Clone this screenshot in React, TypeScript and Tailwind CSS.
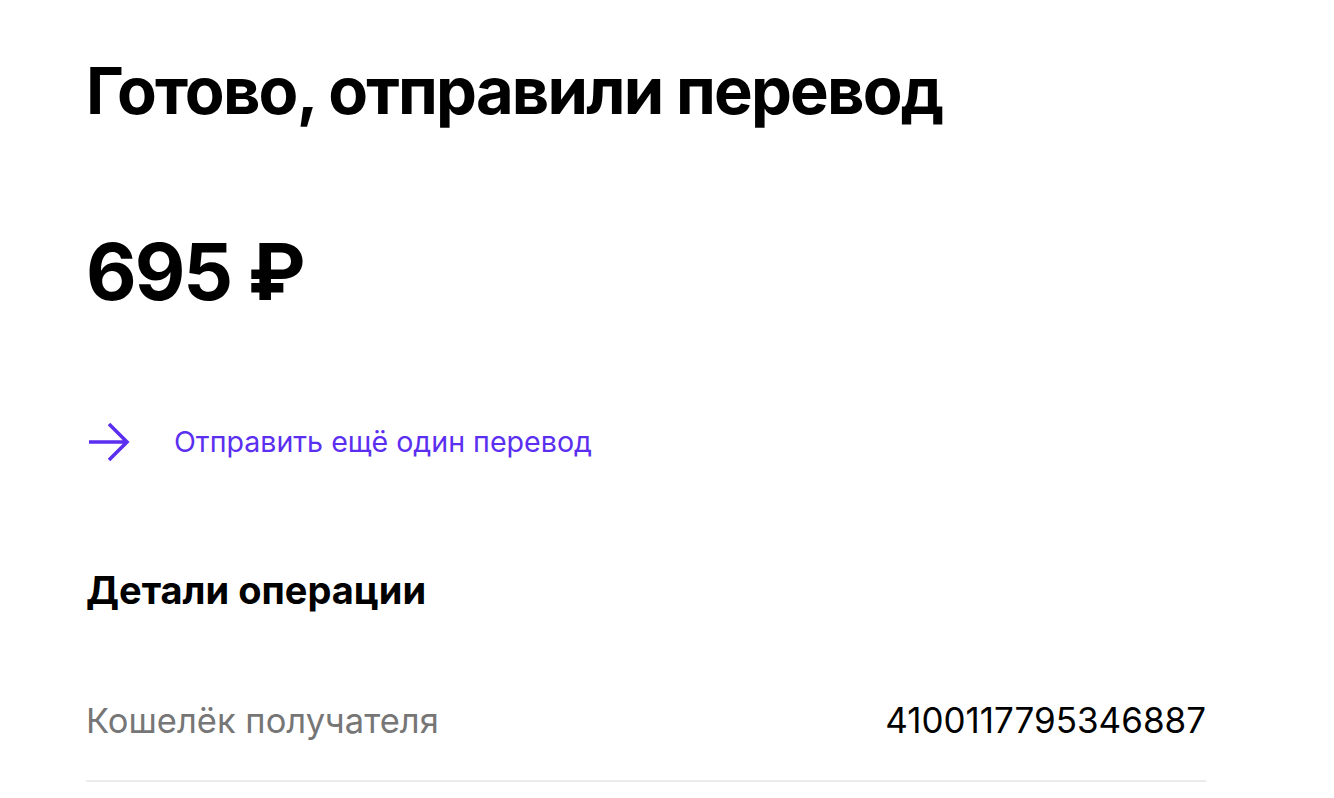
export default function App() {
  return (
    <div className="min-h-screen bg-white font-['Inter','Noto_Sans',sans-serif] text-black">
      <div className="w-[1120px] pl-[86px] pt-[51px] box-content">
        <h1 className="text-[65px] font-bold leading-[80px] tracking-[-1.8px]">
          Готово, отправили перевод
        </h1>
        <div className="mt-[93px] text-[78px] font-bold leading-[96px] tracking-[-2px]">695 ₽</div>
        <a href="#" className="mt-[102px] flex h-[40px] items-center text-[#5b2ff0]">
          <svg width="42" height="40" viewBox="0 0 42 40" className="ml-[2px]" fill="none" stroke="currentColor" strokeWidth="3.6">
            <path d="M1 20h38M21 2l18 18-18 18" />
          </svg>
          <span className="ml-[44px] text-[28.6px] leading-[36px]">Отправить ещё один перевод</span>
        </a>
        <h2 className="mt-[105px] text-[38px] font-bold leading-[46px]">Детали операции</h2>
        <div className="mt-[85px] flex items-baseline justify-between border-b-2 border-[#ebebeb] pb-[37px]">
          <span className="text-[34.5px] leading-[44px] text-[#767676]">Кошелёк получателя</span>
          <span className="text-[35px] leading-[44px]">4100117795346887</span>
        </div>
      </div>
    </div>
  );
}
